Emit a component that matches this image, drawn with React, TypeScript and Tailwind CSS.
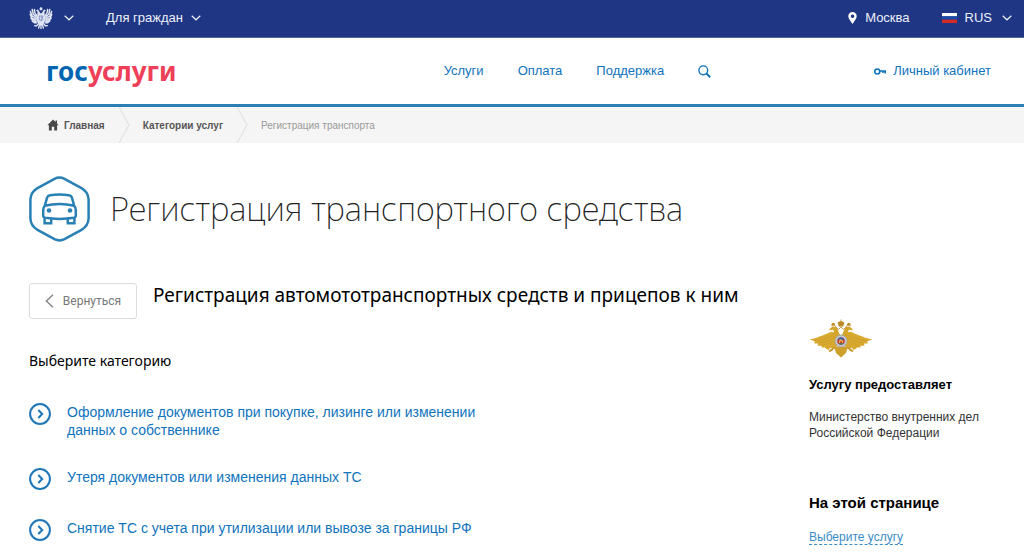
import { ReactNode } from "react";

type Category = {
  id: number;
  title: string;
};

const categories: Category[] = [
  { id: 1, title: "Оформление документов при покупке, лизинге или изменении данных о собственнике" },
  { id: 2, title: "Утеря документов или изменения данных ТС" },
  { id: 3, title: "Снятие ТС с учета при утилизации или вывозе за границы РФ" },
];

const navLinks = ["Услуги", "Оплата", "Поддержка"];

const ChevronDown = () => (
  <svg className="h-[6px] w-[10px]" viewBox="0 0 10 6" fill="none" stroke="currentColor" strokeWidth="1.2">
    <path d="M0.7 0.7L5 4.8L9.3 0.7" />
  </svg>
);

// Double-headed eagle, white, for the top bar
const StateEmblem = () => (
  <svg className="h-6 w-6" viewBox="0 0 24 24" fill="none" stroke="#dfe4f2" strokeLinecap="round">
    <path fill="#dfe4f2" stroke="none" d="M10.4 3L11 1.8L12 1L13 1.8L13.6 3L12.8 4.2H11.2z" />
    <path fill="#dfe4f2" stroke="none" d="M7 4.6L8.6 3.4L9.8 4.6L10.8 6.6L12 7.6L13.2 6.6L14.2 4.6L15.4 3.4L17 4.6L15.4 5.8L15.6 8L16.6 14L14.4 18L12 19.6L9.6 18L7.4 14L8.4 8L8.6 5.8z" />
    <path strokeWidth="1.5" d="M7.6 9.4L5.8 6.6L5.4 3.4M7.4 11L4.2 8L3.2 3.4M7.2 12.6L3 9.8L1.4 5.4M7 14.2L3 12.2L1.2 8.4M7.2 15.6L4.2 14.8L1.8 12M7.8 16.8L5.4 16.8L3.2 15" />
    <path strokeWidth="1.5" d="M16.4 9.4L18.2 6.6L18.6 3.4M16.6 11L19.8 8L20.8 3.4M16.8 12.6L21 9.8L22.6 5.4M17 14.2L21 12.2L22.8 8.4M16.8 15.6L19.8 14.8L22.2 12M16.2 16.8L18.6 16.8L20.8 15" />
    <path strokeWidth="1.4" d="M9.4 17.8L7.4 20L5.6 19.6M14.6 17.8L16.6 20L18.4 19.6M12 18V22.6M10.8 18L9.6 22M13.2 18L14.4 22" />
    <path fill="#8e9ccb" stroke="none" d="M9.8 9.6H14.2V13.8L12 15.6L9.8 13.8z" />
    <path strokeWidth="0.7" d="M12 10.4L11.2 14M11 11.8L13.4 12.8" />
  </svg>
);

const MinistryEmblem = () => (
  <svg className="h-10 w-16" viewBox="0 0 64 40" role="img" aria-label="МВД России">
    <path fill="#d8a92e" d="M0.5 20.2C7 19.8 15 15.5 23 12.5L28 17V27L24.5 29.6L21 28.8L20 31L17 29.8L16 28.4L12.5 28.6L12.5 26.8L8.5 26.8L9 24.6L5 24.4L6 22.4z" />
    <path fill="#d8a92e" d="M63.5 20.2C57 19.8 49 15.5 41 12.5L36 17V27L39.5 29.6L43 28.8L44 31L47 29.8L48 28.4L51.5 28.6L51.5 26.8L55.5 26.8L55 24.6L59 24.4L58 22.4z" />
    <path stroke="#c39628" strokeWidth="0.4" fill="none" d="M5 21.7C12 21.6 18 19 25 16.5M9 24C15 23.6 20 21.5 25 19.5M14 26.2C18 25.4 22 23.4 25 22M59 21.7C52 21.6 46 19 39 16.5M55 24C49 23.6 44 21.5 39 19.5M50 26.2C46 25.4 42 23.4 39 22" />
    <path fill="#cf9f2b" d="M25 27.5L27 34L32 38.5L37 34L39 27.5z" />
    <path fill="#d5a42a" d="M31.5 16C29 14 29.5 10 27 8L23.5 7.6L20 10.5L21.5 11.2L24 10.8L25 12.5L22.5 16L25 20H32zM32.5 16C35 14 34.5 10 37 8L40.5 7.6L44 10.5L42.5 11.2L40 10.8L39 12.5L41.5 16L39 20H32z" />
    <path fill="#b98b28" d="M28.6 3.5L30.5 2.4L31.6 2.2V0.4H32.4V2.2L33.5 2.4L35.4 3.5L34.2 7.6H29.8zM22.2 6.8L22.8 4.6L24.2 3.8L25.7 4.6L26.3 6.8zM37.7 6.8L38.3 4.6L39.8 3.8L41.2 4.6L41.8 6.8z" />
    <path stroke="#b98b28" strokeWidth="0.8" fill="none" d="M26 7L29.5 10.5L32 8L34.5 10.5L38 7" />
    <path stroke="#c8992a" strokeWidth="1.8" fill="none" d="M26 28L21.5 31.5M38 28L42.5 31.5M20 32.5L23.5 30.5M44 32.5L40.5 30.5" />
    <circle cx="32" cy="22" r="6" fill="#c3c8d3" stroke="#a3a098" strokeWidth="0.8" />
    <circle cx="32" cy="22" r="3.8" fill="#cf3a34" />
    <path fill="#3e68b1" d="M28.4 20.8A3.8 3.8 0 0 1 35.6 20.8z" />
    <path fill="#3d8558" d="M29 24.3A3.8 3.8 0 0 0 35 24.3z" />
    <path stroke="#e5c24b" strokeWidth="1.1" fill="none" d="M30.4 23.9L31.2 20.9L33.4 22.1L33.6 23.9" />
  </svg>
);

const CarBadge = () => (
  <svg className="h-[66px] w-[61px] shrink-0" viewBox="0 0 61 66" fill="none" stroke="#2980b4" strokeWidth="2.5">
    <path d="M25.5 2.8Q30.5 0.2 35.5 2.8L52.5 12.2Q59.2 16 59.6 23.5V42.5Q59.2 50 52.5 53.8L35.5 63.2Q30.5 65.8 25.5 63.2L8.5 53.8Q1.8 50 1.4 42.5V23.5Q1.8 16 8.5 12.2z" />
    <path d="M15.8 29.8L18 21.8Q18.8 19.6 21 19.2Q30.5 18 40 19.2Q42.2 19.6 43 21.8L45.2 29.8Q46.8 31.4 46.8 34V40Q46.6 41.4 45 41.8Q30.5 44 16 41.8Q14.4 41.4 14.2 40V34Q14.2 31.4 15.8 29.8Q30.5 26 45.2 29.8" />
    <path d="M15.6 42V47.3H22.2V42.6M38.8 42.6V47.3H45.4V42" />
    <circle cx="20" cy="34.5" r="2.3" fill="#2980b4" stroke="none" />
    <circle cx="41" cy="34.5" r="2.3" fill="#2980b4" stroke="none" />
  </svg>
);

const CrumbArrow = () => (
  <svg className="h-9 w-3" viewBox="0 0 12 36" fill="none" stroke="#e2e2e2" strokeWidth="1.2">
    <path d="M1 0L11 18L1 36" />
  </svg>
);

const TopBar = () => (
  <div className="flex h-[38px] items-center justify-between border-b border-[#5265a5] bg-[#1f3685] pr-3 pb-[2px] pl-[29px] text-[13px] text-[#edf0f8]">
    <div className="flex items-center">
      <button type="button" className="flex items-center gap-[11px]" aria-label="Порталы">
        <StateEmblem />
        <ChevronDown />
      </button>
      <button type="button" className="ml-8 flex items-center gap-2">
        Для граждан
        <ChevronDown />
      </button>
    </div>
    <div className="flex items-center">
      <a href="#" className="flex items-center gap-2">
        <svg className="h-3 w-[9px]" viewBox="0 0 9 12" fill="white">
          <path fillRule="evenodd" d="M4.5 0A4.2 4.2 0 0 0 0.3 4.2C0.3 6.4 2 8.2 4.5 12C7 8.2 8.7 6.4 8.7 4.2A4.2 4.2 0 0 0 4.5 0zM4.5 2.4A1.8 1.8 0 1 1 4.5 6A1.8 1.8 0 1 1 4.5 2.4z" />
        </svg>
        Москва
      </a>
      <button type="button" className="ml-8 flex items-center gap-2">
        <svg className="h-[10px] w-[15px]" viewBox="0 0 15 10">
          <path fill="#fff" d="M0 0H15V3.3H0z" />
          <path fill="#1b4aa8" d="M0 3.3H15V6.6H0z" />
          <path fill="#d52b28" d="M0 6.6H15V10H0z" />
        </svg>
        <span className="mr-[2px]">RUS</span>
        <ChevronDown />
      </button>
    </div>
  </div>
);

const Header = () => (
  <header className="flex h-[69px] items-center border-b-3 border-[#2b7fb2] pr-[33px] pl-[46px] text-[13px] text-[#0f73bd]">
    <a href="#" className="mr-auto font-['Noto_Sans',sans-serif] text-[26px] leading-8 font-bold text-[#0065b1]">
      гос<span className="text-[#ee3f58]">услуги</span>
    </a>
    <nav className="mr-[163px] flex items-center gap-[34px]">
      {navLinks.map((link) => (
        <a href="#" key={link}>{link}</a>
      ))}
      <button type="button" aria-label="Поиск">
        <svg className="h-[13px] w-[13px]" viewBox="0 0 13 13" fill="none" stroke="currentColor">
          <circle cx="5.3" cy="5.3" r="4.4" strokeWidth="1.4" />
          <path d="M8.4 8.4L12.2 12.2" strokeWidth="2" />
        </svg>
      </button>
    </nav>
    <a href="#" className="flex items-center gap-[7px]">
      <svg className="h-[7px] w-3" viewBox="0 0 12 7" fill="none" stroke="currentColor" strokeWidth="1.6">
        <circle cx="3.3" cy="3.5" r="2.5" />
        <path d="M5.8 3H11.2V5.6M9 3V5" />
      </svg>
      Личный кабинет
    </a>
  </header>
);

const Breadcrumbs = () => (
  <nav className="flex h-9 items-center bg-[#f5f5f5] pl-[47px] text-[10px] font-bold text-[#555]">
    <a href="#" className="flex items-center gap-[5px]">
      <svg className="h-3 w-3" viewBox="0 0 12 12" fill="#4a4a4a">
        <path d="M6 0.6L0.4 6.2H1.9V11.4H4.8V7.8H7.2V11.4H10.1V6.2H11.6L10 4.6V1.4H8.5V3.1z" />
      </svg>
      Главная
    </a>
    <span className="mx-[13px]"><CrumbArrow /></span>
    <a href="#">Категории услуг</a>
    <span className="mx-[13px]"><CrumbArrow /></span>
    <span className="font-normal text-[#999]">Регистрация транспорта</span>
  </nav>
);

const CategoryLink = ({ children }: { children: ReactNode }) => (
  <a href="#" className="flex items-start gap-4 text-sm leading-[18px] text-[#0f73bd]">
    <svg className="h-[22px] w-[22px] shrink-0" viewBox="0 0 22 22" fill="none" stroke="#1f76b8" strokeWidth="2">
      <circle cx="11" cy="11" r="9.9" />
      <path d="M9.3 7L13.2 11L9.3 15" />
    </svg>
    <span className="max-w-[430px]">{children}</span>
  </a>
);

const Sidebar = () => (
  <aside className="w-[186px] shrink-0 pt-9 text-xs leading-4 text-[#333]">
    <MinistryEmblem />
    <h3 className="mt-[18px] text-[13px] font-bold text-black">Услугу предоставляет</h3>
    <p className="mt-4">Министерство внутренних дел Российской Федерации</p>
    <h3 className="mt-[52px] text-[15px] leading-5 font-bold text-black">На этой странице</h3>
    <a href="#" className="mt-[17px] inline-block border-b border-dashed border-[#3a8cc9] leading-[14px] text-[#3a8cc9]">
      Выберите услугу
    </a>
  </aside>
);

const App = () => {
  return (
    <div className="min-h-screen bg-white font-['Liberation_Sans',Arial,sans-serif]">
      <TopBar />
      <Header />
      <Breadcrumbs />

      <main className="px-[29px] pt-[33px]">
        <div className="flex items-center gap-5">
          <CarBadge />
          <h1 className="font-['Noto_Sans',sans-serif] text-[33px] leading-10 font-extralight text-[#222]">
            Регистрация транспортного средства
          </h1>
        </div>

        <div className="mt-[41px] flex justify-between">
          <div>
            <div className="flex items-start gap-4">
              <button
                type="button"
                className="flex h-9 w-[108px] items-center justify-center gap-[9px] rounded-[3px] border border-[#dcdcdc] font-['Roboto',sans-serif] text-xs text-[#777]"
              >
                <svg className="h-[14px] w-[9px]" viewBox="0 0 9 14" fill="none" stroke="#888" strokeWidth="1.5">
                  <path d="M8 0.8L1.4 7L8 13.2" />
                </svg>
                Вернуться
              </button>
              <h2 className="font-['Noto_Sans',sans-serif] text-[19px] leading-6 text-black">
                Регистрация автомототранспортных средств и прицепов к ним
              </h2>
            </div>

            <h3 className="mt-8 font-['Noto_Sans',sans-serif] text-sm leading-5 text-black">Выберите категорию</h3>
            <ul className="mt-8 flex flex-col gap-[29px]">
              {categories.map((category) => (
                <li key={category.id}>
                  <CategoryLink>{category.title}</CategoryLink>
                </li>
              ))}
            </ul>
          </div>
          <Sidebar />
        </div>
      </main>
    </div>
  );
};

export default App;
